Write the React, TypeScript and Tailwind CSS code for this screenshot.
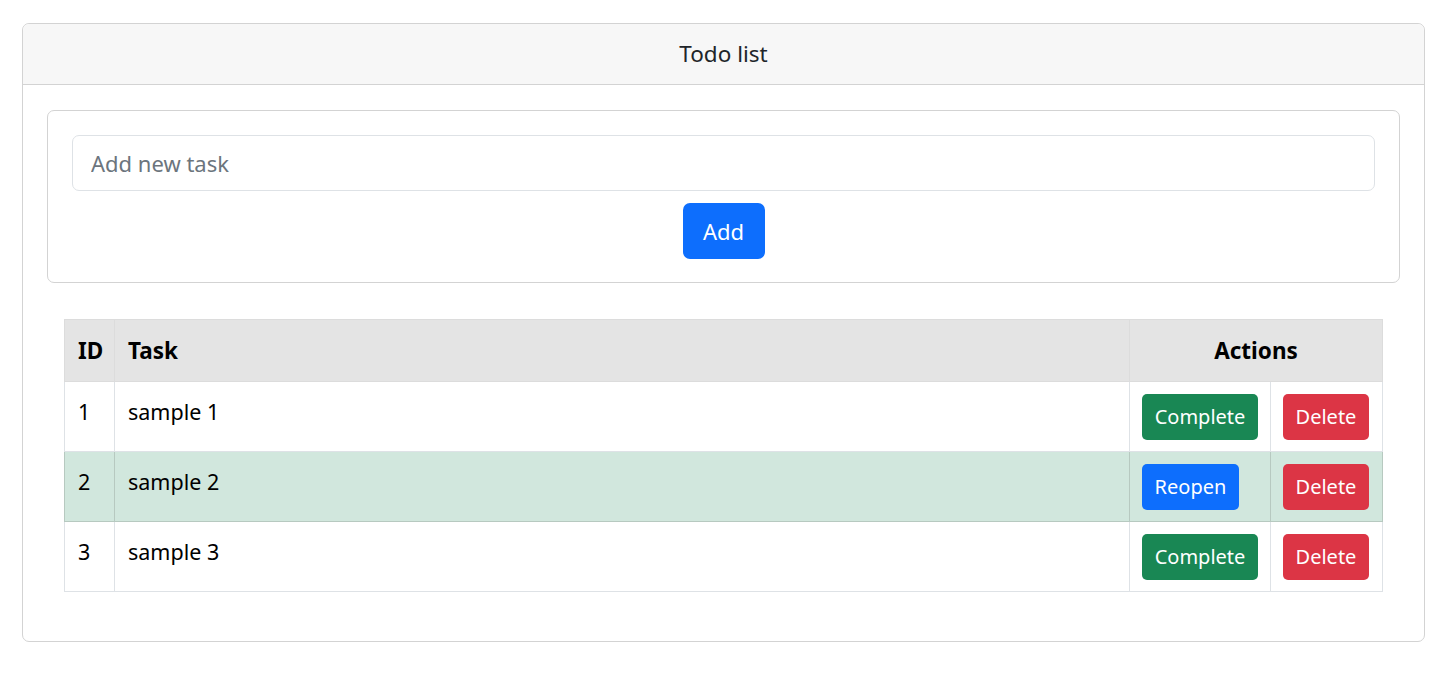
const tasks = [
  { id: 1, text: "sample 1", done: false },
  { id: 2, text: "sample 2", done: true },
  { id: 3, text: "sample 3", done: false },
];

export default function App() {
  return (
    <div className="min-h-screen bg-white pt-[23px] pl-[22px] font-['Noto_Sans',sans-serif] text-[#212529]">
      <div className="w-[1403px] rounded-[7px] border border-[#d3d3d3]">
        <div className="flex h-[61px] items-center justify-center rounded-t-[7px] border-b border-[#d3d3d3] bg-[#f7f7f7] text-[22.5px]">
          Todo list
        </div>

        <div className="px-[24px] pt-[25px] pb-[49px]">
          <div className="rounded-[7px] border border-[#d3d3d3] px-[24px] pt-[24px] pb-[23px]">
            <input
              className="block h-[56px] w-full rounded-[7px] border border-[#dee2e6] px-[18px] text-[22px] text-[#212529] outline-none placeholder:text-[#6c757d]"
              placeholder="Add new task"
            />
            <div className="mt-[12px] flex justify-center">
              <button className="h-[56px] w-[82px] rounded-[7px] bg-[#0d6efd] text-[22px] text-white">
                Add
              </button>
            </div>
          </div>

          <div className="mx-[17px] mt-[36px]">
            <table className="w-full table-fixed border-collapse text-[21.5px] text-black">
              <colgroup>
                <col className="w-[50px]" />
                <col />
                <col className="w-[141px]" />
                <col className="w-[112px]" />
              </colgroup>
              <thead>
                <tr className="h-[62px] bg-[#e4e4e4] text-[22.5px] font-bold">
                  <th className="border border-[#dcdcdc] px-[13px] text-left">ID</th>
                  <th className="border border-[#dcdcdc] px-[13px] text-left">Task</th>
                  <th colSpan={2} className="border border-[#dcdcdc] px-[13px] text-center">
                    Actions
                  </th>
                </tr>
              </thead>
              <tbody>
                {tasks.map((t) => {
                  const cell = t.done
                    ? "border border-[#b7c9c0] bg-[#d1e7dd]"
                    : "border border-[#dee2e6] bg-white";
                  return (
                    <tr key={t.id} className="h-[70px]">
                      <td className={`${cell} px-[13px] pt-[14px] align-top`}>{t.id}</td>
                      <td className={`${cell} px-[13px] pt-[14px] align-top`}>{t.text}</td>
                      <td className={`${cell} px-[12px] align-middle text-[20px]`}>
                        {t.done ? (
                          <button className="h-[46px] w-[97px] rounded-[5px] bg-[#0d6efd] text-white">
                            Reopen
                          </button>
                        ) : (
                          <button className="h-[46px] w-[116px] rounded-[5px] bg-[#198754] text-white">
                            Complete
                          </button>
                        )}
                      </td>
                      <td className={`${cell} px-[12px] align-middle text-[20px]`}>
                        <button className="h-[46px] w-[86px] rounded-[5px] bg-[#dc3545] text-white">
                          Delete
                        </button>
                      </td>
                    </tr>
                  );
                })}
              </tbody>
            </table>
          </div>
        </div>
      </div>
    </div>
  );
}
